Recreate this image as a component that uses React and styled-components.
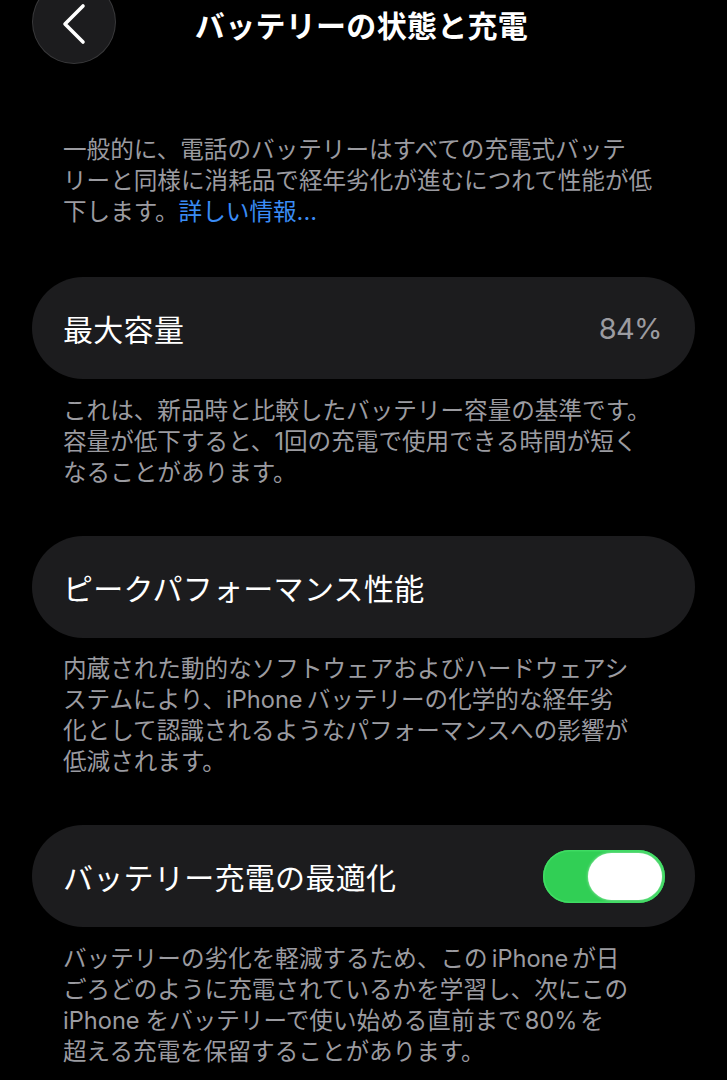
import React from "react";
import styled, { createGlobalStyle } from "styled-components";

const Global = createGlobalStyle`
  html, body { margin: 0; padding: 0; background: #000; }
  body {
    font-family: Inter, "Noto Sans CJK JP", "Noto Sans", sans-serif;
    -webkit-font-smoothing: antialiased;
  }
`;

const Page = styled.div`
  width: 727px;
  height: 1080px;
  overflow: hidden;
  background: #000;
  box-sizing: border-box;
  padding: 0 32px;
  display: flex;
  flex-direction: column;
`;

const Header = styled.header`
  display: grid;
  grid-template-columns: 1fr auto 1fr;
  align-items: center;
  margin: -20px -32px 0;
  padding: 0 32px;
`;

const BackButton = styled.button`
  width: 84px;
  height: 84px;
  border-radius: 50%;
  background: #1c1c1e;
  border: 1.5px solid rgba(255, 255, 255, 0.13);
  box-sizing: border-box;
  padding: 0;
  display: flex;
  align-items: center;
  justify-content: center;
  justify-self: start;
`;

const Title = styled.h1`
  margin: 0 0 0 -4px;
  font-family: "Noto Sans CJK JP", sans-serif;
  font-size: 30px;
  font-weight: 600;
  color: #fff;
  letter-spacing: 0.3px;
  padding-top: 4px;
`;

const Note = styled.p`
  margin: ${(p) => p.$mt}px 0 ${(p) => p.$mb}px;
  padding: 0 31px;
  font-size: 23.6px;
  line-height: 31px;
  color: #9b9ba0;
  white-space: nowrap;
  font-family: "Noto Sans CJK JP", sans-serif;
`;

const Latin = styled.span`
  font-family: Inter, sans-serif;
  line-height: 1;
  margin: 0 ${(p) => p.$gap || 0}px;
`;

const Link = styled.span`
  color: #3a8cf5;
`;

const Card = styled.div`
  height: 102px;
  border-radius: 51px;
  background: #1c1c1e;
  display: flex;
  align-items: center;
  justify-content: space-between;
  padding: 0 30px 0 31px;
  box-sizing: border-box;
  flex-shrink: 0;
`;

const CardLabel = styled.span`
  font-family: "Noto Sans CJK JP", sans-serif;
  font-size: 30px;
  color: #fff;
  letter-spacing: 0.3px;
`;

const CardValue = styled.span`
  font-family: Inter, sans-serif;
  font-size: 29px;
  color: #9b9ba0;
  letter-spacing: -0.6px;
  margin-right: 3px;
`;

const Toggle = styled.div`
  width: 122px;
  height: 53px;
  border-radius: 27px;
  background: #31cf55;
  box-shadow: inset 0 0 0 1.5px #3fdc63;
  display: flex;
  align-items: center;
  justify-content: flex-end;
  padding: 0 3px;
  box-sizing: border-box;
`;

const Knob = styled.div`
  width: 74px;
  height: 47px;
  border-radius: 24px;
  background: #fff;
  box-shadow: 0 0 3px rgba(255, 255, 255, 0.6);
`;

export default function App() {
  return (
    <>
      <Global />
      <Page>
        <Header>
          <BackButton aria-label="戻る">
            <svg width="30" height="42" viewBox="0 0 30 42" style={{ marginTop: 4 }}>
              <path
                d="M24 3 L6 21 L24 39"
                fill="none"
                stroke="#fff"
                strokeWidth="3.6"
                strokeLinecap="round"
                strokeLinejoin="round"
              />
            </svg>
          </BackButton>
          <Title>バッテリーの状態と充電</Title>
          <span />
        </Header>

        <Note $mt={69} $mb={51}>
          一般的に、電話のバッテリーはすべての充電式バッテ
          <br />
          リーと同様に消耗品で経年劣化が進むにつれて性能が低
          <br />
          下します。<Link>詳しい情報<Latin>...</Latin></Link>
        </Note>

        <Card>
          <CardLabel>最大容量</CardLabel>
          <CardValue>84%</CardValue>
        </Card>
        <Note $mt={14.5} $mb={49}>
          これは、新品時と比較したバッテリー容量の基準です。
          <br />
          容量が低下すると、<Latin>1</Latin>回の充電で使用できる時間が短く
          <br />
          なることがあります。
        </Note>

        <Card>
          <CardLabel>ピークパフォーマンス性能</CardLabel>
        </Card>
        <Note $mt={14.5} $mb={49}>
          内蔵された動的なソフトウェアおよびハードウェアシ
          <br />
          ステムにより、<Latin $gap={0}>iPhone</Latin>
          <Latin $gap={2} />バッテリーの化学的な経年劣
          <br />
          化として認識されるようなパフォーマンスへの影響が
          <br />
          低減されます。
        </Note>

        <Card>
          <CardLabel>バッテリー充電の最適化</CardLabel>
          <Toggle>
            <Knob />
          </Toggle>
        </Card>
        <Note $mt={14.5} $mb={0}>
          バッテリーの劣化を軽減するため、この<Latin $gap={4}>iPhone</Latin>が日
          <br />
          ごろどのように充電されているかを学習し、次にこの
          <br />
          <Latin>iPhone</Latin>
          <Latin $gap={3} />をバッテリーで使い始める直前まで<Latin $gap={3}>80%</Latin>を
          <br />
          超える充電を保留することがあります。
        </Note>
      </Page>
    </>
  );
}
